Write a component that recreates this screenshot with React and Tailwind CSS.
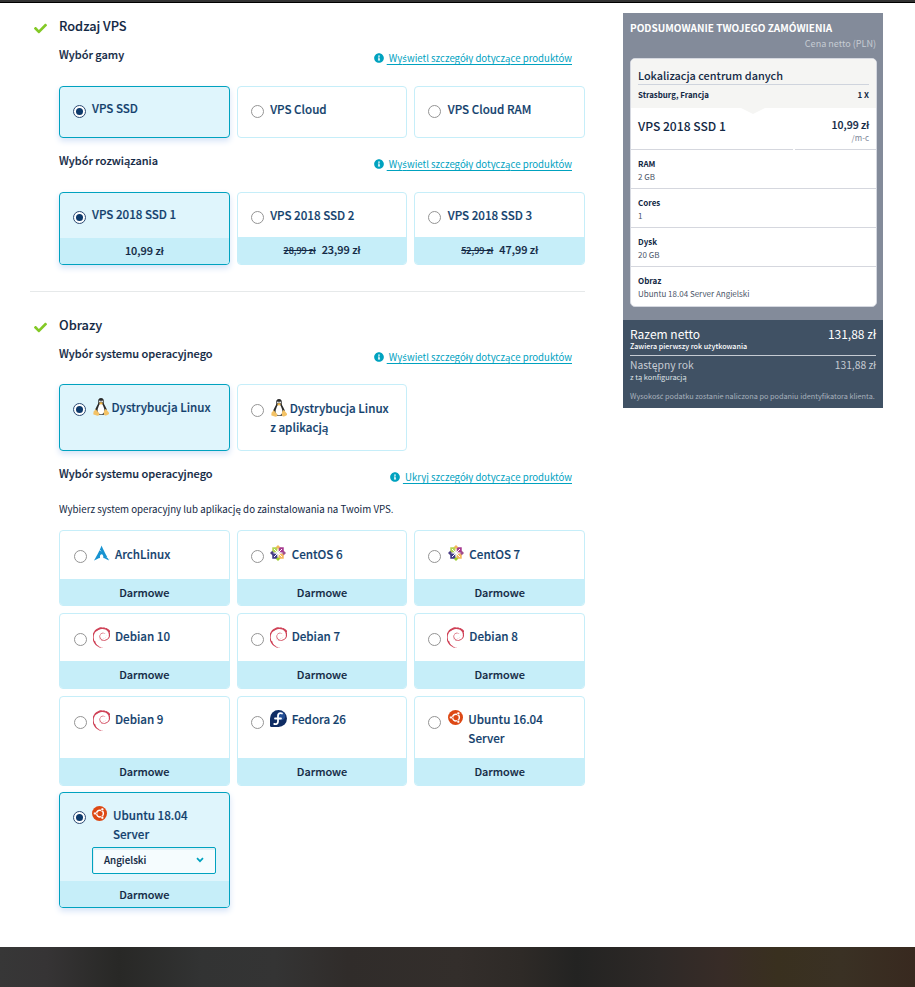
import React from "react";
import { FaInfoCircle, FaCheck } from "react-icons/fa";
import { SiArchlinux, SiDebian } from "react-icons/si";

function Pl({ children }) {
  return children.split(/([śżźćęąńŚŻ])/).map((part, i) =>
    i % 2 ? (
      <span key={i} className="font-['Noto_Sans',sans-serif]">{part}</span>
    ) : (
      part
    )
  );
}

function Radio({ on, className = "" }) {
  return (
    <span
      className={`flex h-[13px] w-[13px] shrink-0 items-center justify-center rounded-full border bg-white ${
        on ? "border-[#2c4a73]" : "border-[#949494]"
      } ${className}`}
    >
      {on && <span className="h-[7px] w-[7px] rounded-full bg-[#0e3a6b]" />}
    </span>
  );
}

function Tux() {
  return (
    <svg viewBox="0 0 32 36" className="h-[18px] w-4 shrink-0">
      <path d="M16 0c-4 0-6 3-5.500 7 .4 4-1 6-3 9.500-2 4-4 7-3.500 11l6 6h12l6-6c.5-4-1.500-7-3.500-11-2-3.500-3.400-5.500-3-9.500C22 3 20 0 16 0z" fill="#2a2a2a" />
      <path d="M16 11c-3 0-4 4-5.500 8-2 4-2 9 1 12 2 2 7 2 9 0 3-3 3-8 1-12-1.500-4-2.500-8-5.500-8z" fill="#fff" />
      <circle cx="13.800" cy="7" r="1.900" fill="#e8e8e8" />
      <circle cx="18.200" cy="7" r="1.900" fill="#e8e8e8" />
      <path d="M12 10.500l4-2.500 4 2.500-4 3z" fill="#f0b84a" />
      <path d="M5 22l7 8c2 3 0 5.500-3 5.500L1 33c-1-1 0-2 0-4 0-4 2-2 4-7z" fill="#f3c266" />
      <path d="M26 22l5.500 7c1.500 1 1 2-1 4-3 2-7 3.500-8.500 0-1-4 0-10 4-11z" fill="#f3c266" />
    </svg>
  );
}

function Arch() {
  return <SiArchlinux className="-mt-[3px] h-4 w-4 text-[#1793d1]" />;
}

function Debian() {
  return <SiDebian viewBox="3 0 17.600 24" preserveAspectRatio="none" className="h-[21px] w-[17px] text-[#cf4257]" />;
}

function CentOS() {
  return (
    <svg viewBox="0 0 32 32" className="-mt-1 h-4 w-4">
      <path d="M16 0l5 5-5 6-5-6z" fill="#f3b65a" />
      <path d="M32 16l-5 5-6-5 6-5z" fill="#a14f8c" />
      <path d="M16 32l-5-5 5-6 5 6z" fill="#9ccd2a" />
      <path d="M0 16l5-5 6 5-6 5z" fill="#4b3f86" />
      <path d="M4.500 4.500h7.500l3 3V15H7.500l-3-3z" fill="#b4d450" />
      <path d="M27.500 4.500H20l-3 3V15h7.500l3-3z" fill="#a63a90" />
      <path d="M4.500 27.500H12l3-3V17H7.500l-3 3z" fill="#403c86" />
      <path d="M27.500 27.500H20l-3-3V17h7.500l3 3z" fill="#f5b95f" />
      <path d="M16 7v18M7 16h18M8 8l16 16M24 8L8 24" stroke="#fff" strokeWidth="2" />
    </svg>
  );
}

function Fedora() {
  return (
    <svg viewBox="0 0 34 34" className="-mt-1 h-[17px] w-[17px]">
      <path d="M17 0a17 17 0 1 1 0 34H3a3 3 0 0 1-3-3V17A17 17 0 0 1 17 0z" fill="#0f2c63" />
      <circle cx="22" cy="12" r="8.500" fill="#2c5ba6" opacity=".75" />
      <path d="M24 7c-5-2-8 .5-8 5v11c0 4-3 6-7.500 5M10 17h12" fill="none" stroke="#fff" strokeWidth="3.600" strokeLinecap="round" />
    </svg>
  );
}

function Ubuntu() {
  return (
    <svg viewBox="0 0 32 32" className="h-[15px] w-[15px] shrink-0">
      <circle cx="16" cy="16" r="16" fill="#dd4814" />
      <circle cx="17" cy="16" r="7.200" fill="none" stroke="#fff" strokeWidth="3.200" />
      <path d="M11 16H4M20 10.800l3-5.300M20 21.200l3 5.300" stroke="#dd4814" strokeWidth="1.800" />
      <g fill="#fff" stroke="#dd4814" strokeWidth="1">
        <circle cx="6.500" cy="16" r="3" />
        <circle cx="22" cy="7" r="3" />
        <circle cx="22" cy="25" r="3" />
      </g>
    </svg>
  );
}

function SectionTitle({ children, className = "" }) {
  return (
    <div className={`flex pl-1 ${className}`}>
      <FaCheck className="mt-[6px] h-[13px] w-[13px] text-[#83c926]" />
      <h2 className="ml-3 text-[12.800px] leading-5 font-medium text-[#122844] [-webkit-text-stroke:0.1px]">{children}</h2>
    </div>
  );
}

function Heading({ label, link, className = "" }) {
  return (
    <div className={`flex justify-between pr-[13px] pl-[29px] ${className}`}>
      <h3 className="-mt-px text-[10.980px] leading-5 font-medium text-[#122844] [-webkit-text-stroke:0.15px]">
        <Pl>{label}</Pl>
      </h3>
      <a className="flex pt-[3px] text-[9.650px] leading-5 text-[#00a2bf]">
        <FaInfoCircle className="mt-[5px] mr-[3px] h-[10px] w-[10px]" />
        <span className="whitespace-pre underline underline-offset-[1.500px] [text-decoration-skip-ink:none]">
          <Pl>{" " + link}</Pl>
        </span>
      </a>
    </div>
  );
}

function Card({ on, className = "", footer, footerClass = "h-[27px]", children }) {
  return (
    <div
      className={`flex flex-col overflow-hidden rounded border ${
        on ? "border-[#00a2bf] bg-[#dff5fc] shadow-[0_3px_6px_#d5e3f7]" : "border-[#c6eef9] bg-white"
      } ${className}`}
    >
      <div className="flex grow pl-[13px] text-[11.600px] leading-[19px] font-medium text-[#123f6d] [-webkit-text-stroke:0.15px]">
        {children}
      </div>
      {footer && (
        <div
          className={`flex shrink-0 items-center justify-center bg-[#c6eef9] text-[10.900px] font-medium text-[#122844] [-webkit-text-stroke:0.15px] ${footerClass}`}
        >
          {footer}
        </div>
      )}
    </div>
  );
}

function Plan({ on, name, old, price, className }) {
  return (
    <Card
      on={on}
      className={className}
      footerClass={on ? "h-[26px] pb-px" : "h-[27px] pb-[2px]"}
      footer={
        price && (
          <>
            {old && <s className="mt-[3px] mr-[6px] text-[9px]">{old}</s>}
            <span>{price}</span>
          </>
        )
      }
    >
      <Radio on={on} className="mt-[18px]" />
      <span className={on ? "mt-[12px] ml-[6px]" : "mt-[13px] ml-[6.500px]"}>{name}</span>
    </Card>
  );
}

function Os({ icon, name, className, footerClass, first, narrow, low }) {
  return (
    <Card className={className} footer="Darmowe" footerClass={footerClass}>
      <Radio className={first ? "mt-[19px] ml-px" : "mt-[19px]"} />
      <span className={`mt-[13px] ml-[6px] flex h-[21px] w-[17px] shrink-0 justify-center ${narrow ? "items-start" : "items-center"}`}>
        {icon}
      </span>
      <span className={narrow ? "mt-[13px] ml-[4px]" : low ? "mt-[14px] ml-[5px]" : "mt-[13px] ml-[5px]"}>{name}</span>
    </Card>
  );
}

function Spec({ name, value, last }) {
  return (
    <div className={`h-[39px] pt-[7px] pl-[7px] text-[8px] leading-[13px] ${last ? "" : "border-b border-[#d5d7de]"}`}>
      <div className="font-bold text-[#122844]">{name}</div>
      <div className="text-[#4b5568]">{value}</div>
    </div>
  );
}

export default function App() {
  return (
    <div className="flex h-[987px] w-[915px] flex-col bg-white font-['Noto_Sans_CJK_SC','Noto_Sans',sans-serif]">
      <div className="h-[3px] shrink-0 border-b border-black bg-[#333]" />
      <div className="flex h-[944px] shrink-0 items-start">
        <main className="w-[585px] pl-[30px]">
          <SectionTitle className="h-10 pt-[13px]">Rodzaj VPS</SectionTitle>
          <Heading className="h-[43px] pt-[2px]" label="Wybór gamy" link="Wyświetl szczegóły dotyczące produktów" />
          <div className="ml-[29px] grid grid-cols-3 gap-x-[7px]">
            <Plan on name="VPS SSD" className="h-[52px]" />
            <Plan name="VPS Cloud" className="h-[52px]" />
            <Plan name="VPS Cloud RAM" className="h-[52px]" />
          </div>
          <Heading className="h-[54px] pt-[13px]" label="Wybór rozwiązania" link="Wyświetl szczegóły dotyczące produktów" />
          <div className="ml-[29px] grid grid-cols-3 gap-x-[7px]">
            <Plan on name="VPS 2018 SSD 1" price="10,99 zł" className="h-[73px]" />
            <Plan name="VPS 2018 SSD 2" old="28,99 zł" price="23,99 zł" className="h-[73px]" />
            <Plan name="VPS 2018 SSD 3" old="52,99 zł" price="47,99 zł" className="h-[73px]" />
          </div>
          <hr className="mt-[26px] border-[#e6e9ea]" />
          <SectionTitle className="h-[50px] pt-[23px]">Obrazy</SectionTitle>
          <Heading className="h-[42px] pt-[2px]" label="Wybór systemu operacyjnego" link="Wyświetl szczegóły dotyczące produktów" />
          <div className="ml-[29px] grid grid-cols-3 gap-x-[7px]">
            <Card on className="h-[67px]">
              <Radio on className="mt-[18px]" />
              <span className="mt-[13px] ml-[7px]"><Tux /></span>
              <span className="mt-[13px] ml-[2.500px]">Dystrybucja Linux</span>
            </Card>
            <Card className="h-[67px]">
              <Radio className="mt-[19px]" />
              <div className="mt-[14px] ml-[6.500px]">
                <div className="flex h-[19px]">
                  <span className="ml-px"><Tux /></span>
                  <span className="ml-[2.500px]">Dystrybucja Linux</span>
                </div>
                <div><Pl>z aplikacją</Pl></div>
              </div>
            </Card>
          </div>
          <Heading className="h-[49px] pt-[13px]" label="Wybór systemu operacyjnego" link="Ukryj szczegóły dotyczące produktów" />
          <p className="ml-[29px] h-[30px] text-[9.720px] leading-[19px] text-[#122844]">
            <Pl>Wybierz system operacyjny lub aplikację do zainstalowania na Twoim VPS.</Pl>
          </p>
          <div className="ml-[29px] grid grid-cols-3 gap-x-[7px] gap-y-[7px]">
            <Os first low icon={<Arch />} name="ArchLinux" className="h-[76px]" footerClass="h-[26px]" />
            <Os low icon={<CentOS />} name="CentOS 6" className="h-[76px]" footerClass="h-[26px]" />
            <Os low icon={<CentOS />} name="CentOS 7" className="h-[76px]" footerClass="h-[26px]" />
            <Os first icon={<Debian />} name="Debian 10" className="h-[76px]" />
            <Os icon={<Debian />} name="Debian 7" className="h-[76px]" />
            <Os icon={<Debian />} name="Debian 8" className="h-[76px]" />
            <Os first icon={<Debian />} name="Debian 9" className="h-[90px]" />
            <Os icon={<Fedora />} name="Fedora 26" className="h-[90px]" />
            <Os icon={<Ubuntu />} name={<>Ubuntu 16.04<br />Server</>} className="h-[90px]" narrow />
          </div>
          <div className="mt-[6px] ml-[29px] grid grid-cols-3 gap-x-[7px]">
            <Card on className="h-[116px]" footer="Darmowe" footerClass="h-[26px]">
              <Radio on className="mt-[18px]" />
              <div className="ml-[6px]">
                <div className="flex h-[54px] pt-[13px]">
                  <Ubuntu />
                  <span className="ml-[6px]">Ubuntu 18.04<br />Server</span>
                </div>
                <div className="flex h-[27px] w-[124px] items-center justify-between rounded-xs border border-[#00a2bf] bg-[#f5fcfe] pr-[11px] pl-[11px] text-[9.800px] text-[#122844] shadow-[inset_1px_2px_0_#dff0f6]">
                  <span>Angielski</span>
                  <svg viewBox="0 0 8 6" className="-mt-[2px] h-[6px] w-2">
                    <path d="M1 1.200l3 3 3-3" fill="none" stroke="#00a2bf" strokeWidth="1.700" />
                  </svg>
                </div>
              </div>
            </Card>
          </div>
        </main>

        <aside className="mt-[10px] ml-[38px] h-[395px] w-[260px] bg-[#838b9a]">
          <div className="flex h-[307px] flex-col px-[7px] pt-[7px]">
            <div className="text-[10px] leading-4 font-bold text-white">PODSUMOWANIE TWOJEGO ZAMÓWIENIA</div>
            <div className="h-[22px] text-right text-[9.050px] leading-4 text-[#c6cbd3]">Cena netto (PLN)</div>
            <div className="h-[249px] w-[247px] overflow-hidden rounded-[5px] border border-[#d5d8e0] bg-white">
              <div className="relative h-[49px] bg-[#f5f5f3] px-[7px] pt-[8px]">
                <div className="h-[18px] border-b border-[#cfd4dd] text-[10.900px] leading-[17px] font-medium text-[#122844]">
                  Lokalizacja centrum danych
                </div>
                <div className="flex justify-between pt-[2px] text-[7.900px] leading-4 font-bold text-[#122844]">
                  <span>Strasburg, Francja</span>
                  <span>1 X</span>
                </div>
                <svg viewBox="0 0 24 6" className="absolute top-[49px] left-[110px] h-[6px] w-6">
                  <path d="M0 0h24L12 6z" fill="#f5f5f3" />
                </svg>
              </div>
              <div className="relative flex h-[42px] justify-between border-b border-[#d5d7de] px-[7px] text-[#122844]">
                <span className="pt-[8px] text-[12.100px] leading-[20px] font-medium">VPS 2018 SSD 1</span>
                <div className="pt-[9px] text-right">
                  <div className="text-[10.500px] leading-4 font-medium [-webkit-text-stroke:0.15px]">10,99 zł</div>
                  <div className="text-[8px] leading-[10px] text-[#7a8496]">/m-c</div>
                </div>
                <span className="absolute -bottom-px left-[162px] h-px w-[2px] bg-white" />
              </div>
              <Spec name="RAM" value="2 GB" />
              <Spec name="Cores" value="1" />
              <Spec name="Dysk" value="20 GB" />
              <Spec name="Obraz" value="Ubuntu 18.04 Server Angielski" last />
            </div>
          </div>
          <div className="h-[88px] bg-[#405164] px-[7px] pt-[7px] text-white">
            <div className="flex h-[14px] justify-between text-[12px] leading-[14px]">
              <span>Razem netto</span>
              <span>131,88 zł</span>
            </div>
            <div className="h-[15px] border-b border-[#c6cbd3] text-[7.150px] leading-[11px] font-medium">
              <Pl>Zawiera pierwszy rok użytkowania</Pl>
            </div>
            <div className="flex h-[16px] justify-between pt-[2px] text-[10.300px] leading-[14px] text-[#c6cbd3]">
              <span><Pl>Następny rok</Pl></span>
              <span>131,88 zł</span>
            </div>
            <div className="h-[19px] text-[7.400px] leading-[10px] text-[#dfe2e6]"><Pl>z tą konfiguracją</Pl></div>
            <div className="text-[7.300px] leading-[10px] whitespace-nowrap text-[#a9b2bd]">
              <Pl>Wysokość podatku zostanie naliczona po podaniu identyfikatora klienta.</Pl>
            </div>
          </div>
        </aside>
      </div>
      <footer className="h-10 shrink-0 bg-[linear-gradient(90deg,#373737_0%,#363435_5%,#282826_13%,#323333_22%,#343434_30%,#302c2a_38%,#332e2b_50%,#2e2a27_57%,#232322_63%,#2e2927_72%,#382c27_79%,#39301f_85%,#3a3124_92%,#38291f_100%)]" />
    </div>
  );
}
